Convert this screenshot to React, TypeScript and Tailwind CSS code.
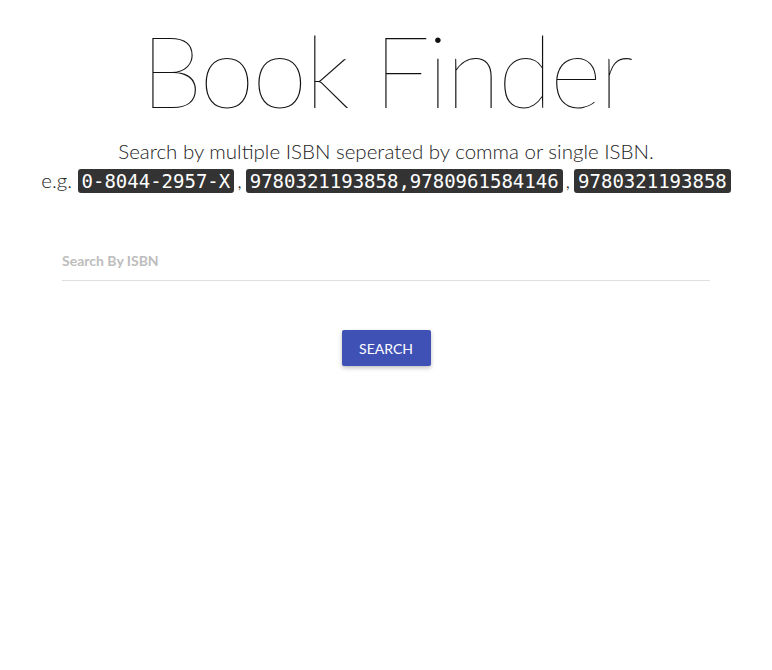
import { useState } from "react";

const examples = ["0-8044-2957-X", "9780321193858,9780961584146", "9780321193858"];

export default function App() {
  const [isbn, setIsbn] = useState("");

  return (
    <div className="min-h-screen bg-white text-[#222] font-['Lato',sans-serif]">
      <div className="flex flex-col items-center pt-[9px]">
        <h1 className="text-[100px] font-thin leading-[120px] tracking-[-2.3px] text-[#111]">Book Finder</h1>
        <p className="mt-[8px] text-[20.5px] font-light leading-[29px] text-center">
          Search by multiple ISBN seperated by comma or single ISBN.
          <br />
          e.g.{" "}
          {examples.map((e, i) => (
            <span key={i}>
              <code className="rounded-[3px] bg-[#333] px-[4px] py-[1px] text-[19px] text-white font-['DejaVu_Sans_Mono',monospace]">
                {e}
              </code>
              {i < examples.length - 1 ? <span className="ml-[3px] mr-[4px]">,</span> : null}
            </span>
          ))}
        </p>
      </div>

      <div className="mx-[62px] mt-[52px]">
        <input
          value={isbn}
          onChange={(ev) => setIsbn(ev.target.value)}
          placeholder="Search By ISBN"
          className="w-full border-b border-[#e0e0e0] pb-[9px] text-[14px] font-bold outline-none placeholder:text-[#bdbdbd]"
        />
      </div>

      <div className="mt-[49px] flex justify-center">
        <button className="h-[36px] w-[89px] rounded-[2px] bg-[#3f51b5] text-[14px] text-white shadow-[0_2px_4px_rgba(0,0,0,0.25)]">
          SEARCH
        </button>
      </div>
    </div>
  );
}
